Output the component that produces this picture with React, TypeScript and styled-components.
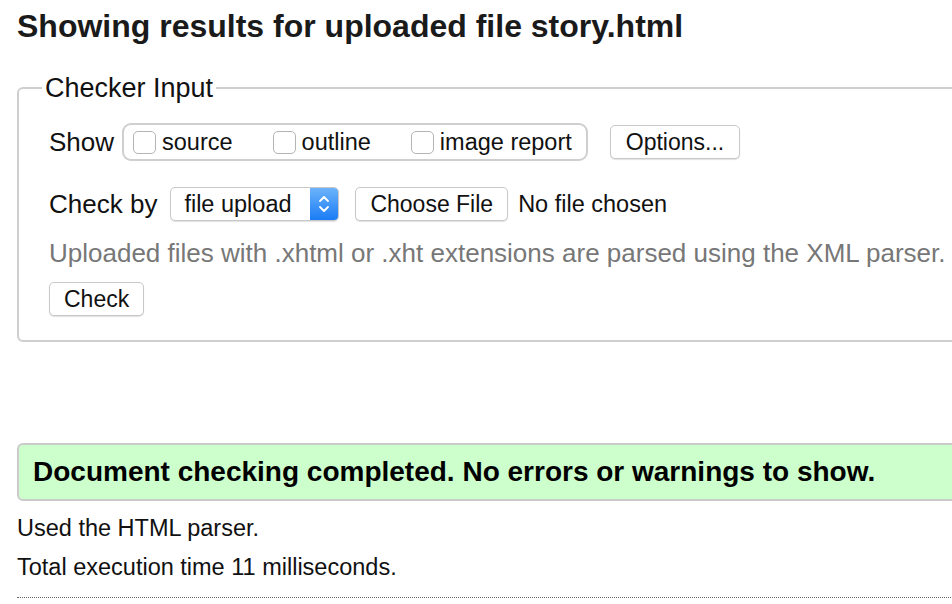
import React from "react";
import styled, { createGlobalStyle } from "styled-components";

const GlobalStyle = createGlobalStyle`
  html, body {
    margin: 0;
    padding: 0;
    background: #fff;
    overflow: hidden;
  }
  body {
    font-family: "Liberation Sans", Arial, Helvetica, sans-serif;
    color: #111;
  }
`;

const Page = styled.div`
  width: 1040px;
  padding: 0 0 0 17px;
`;

const Heading = styled.h2`
  margin: 0;
  padding-top: 8px;
  font-size: 32px;
  font-weight: bold;
  line-height: 36px;
  color: #1a1a1a;
`;

const Fieldset = styled.fieldset`
  margin: 29px 0 0 0;
  padding: 0 0 22px 30px;
  border: 2px solid #cfcfcf;
  border-radius: 6px;
  min-width: 0;
`;

const Legend = styled.legend`
  padding: 0 3px;
  margin-left: -7px;
  font-size: 27px;
  line-height: 30px;
  color: #111;
`;

const Row = styled.div<{ $mt: number }>`
  display: flex;
  align-items: center;
  margin-top: ${(p) => p.$mt}px;
  height: 38px;
`;

const RowLabel = styled.span<{ $gap: number }>`
  font-size: 26px;
  color: #111;
  margin-right: ${(p) => p.$gap}px;
`;

const CheckGroup = styled.div`
  display: flex;
  align-items: center;
  height: 34px;
  padding: 0 14px 0 9px;
  border: 2px solid #cfcfcf;
  border-radius: 9px;
  gap: 40px;
`;

const CheckItem = styled.label`
  display: flex;
  align-items: center;
  gap: 6px;
  font-size: 23.5px;
  color: #111;
`;

const Box = styled.span`
  width: 21px;
  height: 21px;
  border: 1px solid #b4b4b4;
  border-radius: 5px;
  background: #fff;
`;

const MacButton = styled.button<{ $ml?: number; $px?: number }>`
  height: 34px;
  margin-left: ${(p) => p.$ml ?? 0}px;
  padding: 0 ${(p) => p.$px ?? 14}px;
  font-family: "Liberation Sans", Arial, sans-serif;
  font-size: 23px;
  color: #111;
  background: #fff;
  border: 1px solid #c8c8c8;
  border-radius: 5px;
  box-shadow: 0 1px 1px rgba(0, 0, 0, 0.12);
`;

const Select = styled.div`
  display: flex;
  height: 34px;
  width: 169px;
  box-sizing: border-box;
  border: 1px solid #c8c8c8;
  border-radius: 5px;
  overflow: hidden;
  box-shadow: 0 1px 1px rgba(0, 0, 0, 0.12);
`;

const SelectText = styled.span`
  flex: 1;
  display: flex;
  align-items: center;
  padding-left: 13px;
  font-size: 23.5px;
  color: #111;
`;

const SelectArrow = styled.span`
  width: 28px;
  display: flex;
  align-items: center;
  justify-content: center;
  background: linear-gradient(#6cb3fa, #1a7cf5);
`;

const FileName = styled.span`
  font-size: 23.5px;
  color: #111;
  margin-left: 10px;
`;

const Hint = styled.p`
  margin: 15px 0 0 0;
  font-size: 26px;
  line-height: 30px;
  color: #777;
  white-space: nowrap;
`;

const Success = styled.div`
  margin-top: 101px;
  height: 54px;
  display: flex;
  align-items: center;
  padding-left: 14px;
  background: #ccffcc;
  border: 2px solid #cbcbcb;
  border-radius: 6px;
  font-size: 28px;
  font-weight: bold;
  color: #000;
`;

const Info = styled.p<{ $mt: number }>`
  margin: ${(p) => p.$mt}px 0 0 0;
  font-size: 23.5px;
  line-height: 30px;
  color: #111;
`;

const Divider = styled.hr`
  margin: 15px 0 0 0;
  border: 0;
  border-top: 1px dotted #666;
`;

const Chevrons = () => (
  <svg width="14" height="24" viewBox="0 0 14 24" fill="none">
    <path d="M3 9 L7 5 L11 9" stroke="#fff" strokeWidth="1.8" strokeLinecap="round" strokeLinejoin="round" />
    <path d="M3 15 L7 19 L11 15" stroke="#fff" strokeWidth="1.8" strokeLinecap="round" strokeLinejoin="round" />
  </svg>
);

const App: React.FC = () => {
  return (
    <Page>
      <GlobalStyle />
      <Heading>Showing results for uploaded file story.html</Heading>

      <Fieldset>
        <Legend>Checker Input</Legend>

        <Row $mt={20}>
          <RowLabel $gap={8}>Show</RowLabel>
          <CheckGroup>
            <CheckItem>
              <Box />
              source
            </CheckItem>
            <CheckItem>
              <Box />
              outline
            </CheckItem>
            <CheckItem>
              <Box />
              image report
            </CheckItem>
          </CheckGroup>
          <MacButton $ml={22} $px={15}>Options...</MacButton>
        </Row>

        <Row $mt={24}>
          <RowLabel $gap={13}>Check by</RowLabel>
          <Select>
            <SelectText>file upload</SelectText>
            <SelectArrow>
              <Chevrons />
            </SelectArrow>
          </Select>
          <MacButton $ml={16}>Choose File</MacButton>
          <FileName>No file chosen</FileName>
        </Row>

        <Hint>Uploaded files with .xhtml or .xht extensions are parsed using the XML parser.</Hint>

        <Row $mt={12}>
          <MacButton>Check</MacButton>
        </Row>
      </Fieldset>

      <Success>Document checking completed. No errors or warnings to show.</Success>

      <Info $mt={12}>Used the HTML parser.</Info>
      <Info $mt={9}>Total execution time 11 milliseconds.</Info>
      <Divider />
    </Page>
  );
};

export default App;
